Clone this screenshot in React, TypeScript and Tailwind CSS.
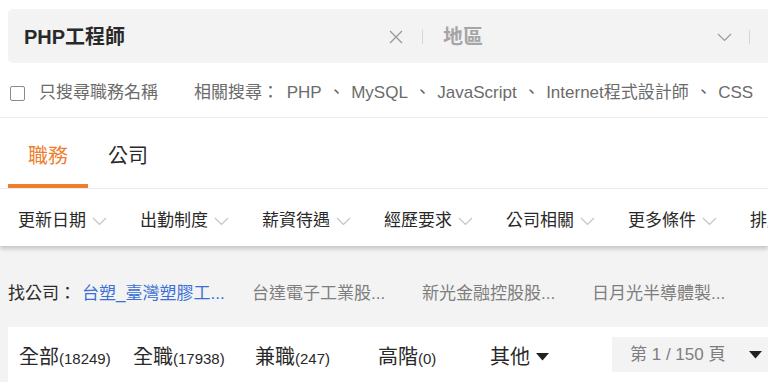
import { ReactNode } from 'react';

const font = {
  fontFamily: '"Liberation Sans", "Noto Sans CJK TC", sans-serif',
};

const filters = ['更新日期', '出勤制度', '薪資待遇', '經歷要求', '公司相關', '更多條件', '排序'];
const related = ['PHP', 'MySQL', 'JavaScript', 'Internet程式設計師', 'CSS'];
const companies = ['台達電子工業股...', '新光金融控股股...', '日月光半導體製...'];

function Chevron({ className = '' }: { className?: string }) {
  return (
    <svg width="15" height="9" viewBox="0 0 15 9" fill="none" className={className} aria-hidden="true">
      <path d="M1 1l6.5 6.5L14 1" stroke="currentColor" strokeWidth="1.2" />
    </svg>
  );
}

function Caret() {
  return (
    <svg width="13" height="8" viewBox="0 0 13 8" className="shrink-0" aria-hidden="true">
      <path d="M0 0h13L6.5 7.5z" fill="#222" />
    </svg>
  );
}

function JobTab({ label, count, width }: { label: string; count: string; width: string }) {
  return (
    <div className={`flex shrink-0 items-baseline text-[20px] text-[#292929] ${width}`}>
      {label}
      <span className="text-[15px]">({count})</span>
    </div>
  );
}

function Sep({ children }: { children: ReactNode }) {
  return <span className="mx-[1.5px] text-[#666]">{children}</span>;
}

export default function App() {
  return (
    <div className="h-[382px] w-[768px] overflow-hidden bg-[#f3f3f3]" style={font}>
      <div className="bg-white">
        {/* keyword + area search */}
        <div className="pl-2 pt-[9px]">
          <div className="flex h-[54px] w-[800px] items-center rounded-[5px] bg-[#f3f3f3] pt-[2px]">
            <span className="ml-[16px] w-[364px] text-[20px] font-bold text-[#292929]">PHP工程師</span>
            <svg width="16" height="16" viewBox="0 0 16 16" className="text-[#9a9a9a]" aria-hidden="true">
              <path d="M2 2l12 12M14 2L2 14" stroke="currentColor" strokeWidth="1.4" />
            </svg>
            <span className="ml-[18px] h-[14px] w-px bg-[#d6d6d6]" />
            <span className="ml-[20px] w-[274px] text-[20px] font-bold text-[#a5a5a5]">地區</span>
            <Chevron className="text-[#9a9a9a]" />
            <span className="ml-[17px] h-[14px] w-px bg-[#d6d6d6]" />
          </div>
        </div>

        {/* only-title checkbox + related searches */}
        <div className="flex h-[55px] items-center whitespace-nowrap border-b border-[#ececec] pt-[6px] text-[17px] text-[#6b6b6b]">
          <span className="ml-[10px] h-[15px] w-[15px] shrink-0 rounded-[2px] border border-[#8a8a8a] bg-white" />
          <span className="ml-[14px]">只搜尋職務名稱</span>
          <span className="ml-[36px]">
            相關搜尋：&nbsp;<span className="ml-[3px]" />
            {related.map((r, i) => (
              <span key={r}>
                {i > 0 && <Sep>&nbsp;、&nbsp;</Sep>}
                {r}
              </span>
            ))}
          </span>
        </div>

        {/* job / company tabs */}
        <div className="flex h-[71px] items-end border-b border-[#ececec] pl-2">
          <div className="flex h-full w-[80px] flex-col items-center">
            <span className="flex flex-1 items-center pt-[9px] text-[20px] text-[#ee7f2f]">職務</span>
            <span className="h-[4px] w-full bg-[#ee7f2f]" />
          </div>
          <div className="flex h-full w-[80px] flex-col items-center">
            <span className="flex flex-1 items-center pt-[9px] text-[20px] text-[#292929]">公司</span>
            <span className="h-[4px]" />
          </div>
        </div>

        {/* filter dropdowns */}
        <div className="relative z-10 flex h-[57px] items-center whitespace-nowrap pl-[18px] pt-[7px] shadow-[0_3px_4px_rgba(0,0,0,0.18)]">
          {filters.map((f) => (
            <div key={f} className="flex w-[122px] shrink-0 items-center gap-[6px] text-[17px] text-[#292929]">
              {f}
              <Chevron className="text-[#c4c4c4]" />
            </div>
          ))}
        </div>
      </div>

      {/* company shortcuts */}
      <div className="flex h-[81px] items-center whitespace-nowrap pl-2 pt-[15px] text-[17px]">
        <span className="text-[#292929]">找公司：</span>
        <span className="ml-[6px] w-[170px] shrink-0 text-[#3a70d6]">台塑_臺灣塑膠工...</span>
        {companies.map((c) => (
          <span key={c} className="w-[170px] shrink-0 text-[#7e7e7e]">
            {c}
          </span>
        ))}
      </div>

      {/* result tabs + paging */}
      <div className="ml-2 flex h-[60px] items-start whitespace-nowrap bg-white">
        <div className="flex h-[57px] shrink-0 items-center pl-[11px] pt-[2px]">
          <JobTab label="全部" count="18249" width="w-[114px]" />
          <JobTab label="全職" count="17938" width="w-[122px]" />
          <JobTab label="兼職" count="247" width="w-[123px]" />
          <JobTab label="高階" count="0" width="w-[112px]" />
          <div className="flex shrink-0 items-center gap-[6px] text-[20px] text-[#292929]">
            其他
            <Caret />
          </div>
        </div>
        <div className="ml-[63px] mt-[10px] flex h-[35px] w-[170px] shrink-0 items-center bg-[#f3f3f3] pl-[18px] text-[17px] text-[#7e7e7e]">
          <span className="w-[119px] shrink-0">第 1 / 150 頁</span>
          <Caret />
        </div>
      </div>
    </div>
  );
}
